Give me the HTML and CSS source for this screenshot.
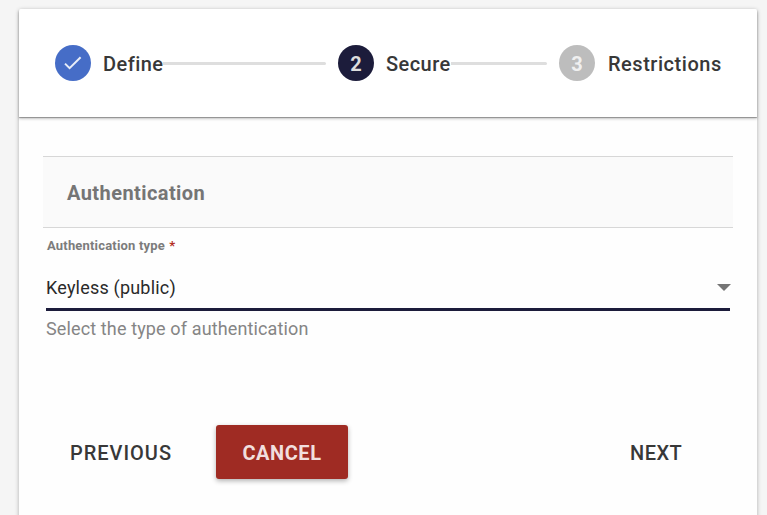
FILE: index.html
```html
<!DOCTYPE html>
<html lang="en">
<head>
<meta charset="utf-8">
<title>Secure</title>
<link rel="stylesheet" href="styles.css">
</head>
<body>
<main class="card">
  <header class="stepper">
    <div class="step step-done">
      <span class="badge"><svg width="18" height="14" viewBox="0 0 18 14"><path d="M1 7.6 5.6 12.2 16.6 1.2" fill="none" stroke="currentColor" stroke-width="2"/></svg></span>
      <span class="label label-define">Define</span>
    </div>
    <span class="line line-first"></span>
    <div class="step step-active">
      <span class="badge">2</span>
      <span class="label label-secure">Secure</span>
    </div>
    <span class="line"></span>
    <div class="step">
      <span class="badge">3</span>
      <span class="label label-restrictions">Restrictions</span>
    </div>
  </header>
  <section class="content">
    <h2 class="section-title"><span>Authentication</span></h2>
    <div class="field">
      <div class="field-label"><span>Authentication type</span> <span class="required">*</span></div>
      <div class="select"><span class="value">Keyless (public)</span><svg class="arrow" width="14" height="7" viewBox="0 0 14 7"><path d="M0 0h14L7 7z" fill="#757575"/></svg></div>
      <div class="hint"><span>Select the type of authentication</span></div>
    </div>
  </section>
  <footer class="actions">
    <button class="button previous">PREVIOUS</button>
    <button class="button cancel">CANCEL</button>
    <button class="button next">NEXT</button>
  </footer>
</main>
</body>
</html>
```
FILE: styles.css
```css
* { box-sizing: border-box; }
body {
  margin: 0;
  height: 515px;
  overflow: hidden;
  padding: 9px 10px 0 19px;
  background: #f5f5f5;
  font-family: Roboto, "Liberation Sans", sans-serif;
  color: #383838;
}
.card {
  height: 530px;
  background: #fefefe;
  border-radius: 2px;
  box-shadow: 0 1px 4px rgba(0, 0, 0, .3);
}
.stepper {
  display: flex;
  align-items: center;
  height: 108px;
  padding: 0 36px;
  background: #fff;
  border-radius: 2px 2px 0 0;
  box-shadow: 0 1px 1px rgba(0, 0, 0, .32), 0 2px 3px rgba(0, 0, 0, .2);
}
.step { display: flex; align-items: center; gap: 12px; }
.badge {
  display: flex;
  align-items: center;
  justify-content: center;
  width: 36px;
  height: 36px;
  border-radius: 50%;
  background: #bdbdbd;
  color: #f0f0f0;
  font-size: 20px;
  font-weight: 700;
  padding-top: 2px;
}
.step-done .badge { background: #466dc7; color: #e8edf8; padding: 0; }
.step-active .badge { background: #1c1c3b; color: #ddd; }
.label {
  padding-top: 2px;
  font-size: 20px;
  line-height: 24px;
  font-weight: 500;
  white-space: nowrap;
}
.label-define { width: 60px; letter-spacing: .45px; }
.label-secure { width: 65px; letter-spacing: .45px; }
.label-restrictions { width: 114px; padding-left: 1px; letter-spacing: .53px; }
.line {
  flex: 1;
  height: 3px;
  margin-right: 12px;
  background: #dedede;
  border-radius: 0 2px 2px 0;
}
.line-first { flex: 0 0 163px; }
.content { padding: 39px 24px 0; }
.section-title {
  display: flex;
  align-items: center;
  height: 72px;
  margin: 0;
  padding: 2px 24px 0;
  background: #fafafa;
  border: solid #d7d7d7;
  border-width: 1px 0;
  color: #757575;
  font-size: 20px;
  font-weight: 700;
  letter-spacing: .42px;
}
.field { padding: 0 3px; }
.field-label {
  height: 37px;
  padding: 9px 0 0 1px;
  color: #7c7c7c;
  font-size: 13px;
  line-height: 18px;
  font-weight: 700;
  letter-spacing: .18px;
}
.required { margin-left: 1px; color: #b32d25; }
.select {
  display: flex;
  align-items: center;
  justify-content: space-between;
  height: 46px;
  padding-top: 2px;
  border-bottom: 3px solid #1c1c3b;
  color: #2a2a2a;
  font-size: 18px;
  letter-spacing: .2px;
}
.arrow { margin-right: -1px; }
.hint {
  padding-top: 7px;
  color: #858585;
  font-size: 18px;
  line-height: 22px;
  letter-spacing: .13px;
}
.actions {
  display: flex;
  height: 54px;
  margin-top: 85px;
  padding: 0 51px;
}
.button {
  height: 54px;
  padding: 2px 0 0;
  border: 0;
  border-radius: 3px;
  background: none;
  color: #383838;
  font: 500 20px/24px Roboto, "Liberation Sans", sans-serif;
  text-align: left;
  white-space: nowrap;
}
.previous { width: 102px; letter-spacing: .97px; }
.cancel {
  width: 132px;
  margin-left: 44px;
  background: #9f2b23;
  color: #f1dfde;
  font-weight: 700;
  letter-spacing: .55px;
  text-align: center;
  box-shadow: 0 2px 5px rgba(0, 0, 0, .3);
}
.next { width: 52px; margin-left: auto; margin-right: 24px; letter-spacing: .45px; }
```
